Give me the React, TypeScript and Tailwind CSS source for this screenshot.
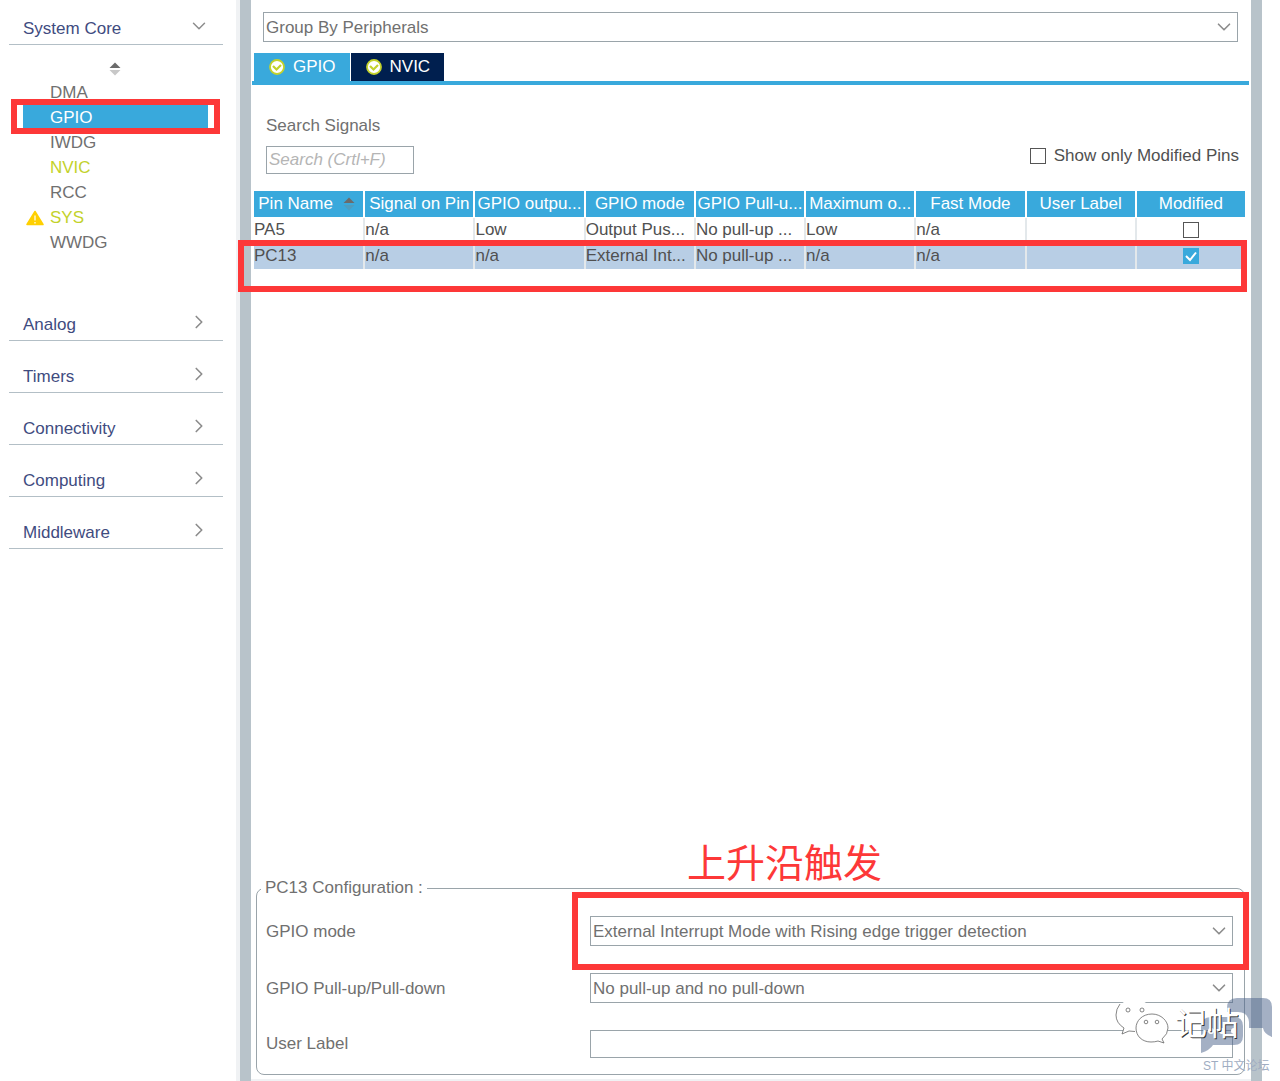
import React from 'react';
import { LuChevronDown, LuChevronRight } from 'react-icons/lu';

const coreItems = [
    { name: 'DMA' },
    { name: 'GPIO', selected: true },
    { name: 'IWDG' },
    { name: 'NVIC', active: true },
    { name: 'RCC' },
    { name: 'SYS', active: true, warning: true },
    { name: 'WWDG' },
];

const categories = ['Analog', 'Timers', 'Connectivity', 'Computing', 'Middleware'];

const columns = [
    'Pin Name',
    'Signal on Pin',
    'GPIO outpu...',
    'GPIO mode',
    'GPIO Pull-u...',
    'Maximum o...',
    'Fast Mode',
    'User Label',
    'Modified',
];

const pins = [
    { cells: ['PA5', 'n/a', 'Low', 'Output Pus...', 'No pull-up ...', 'Low', 'n/a', ''], modified: false },
    { cells: ['PC13', 'n/a', 'n/a', 'External Int...', 'No pull-up ...', 'n/a', 'n/a', ''], modified: true },
];

const SortIcon: React.FC<{ top: string; bottom: string }> = ({ top, bottom }) => (
    <svg width="12" height="14" viewBox="0 0 12 14" className="shrink-0">
        <path d="M6 0.5 11.5 6H0.5z" fill={top} />
        <path d="M0.5 8h11L6 13.5z" fill={bottom} />
    </svg>
);

const WarningIcon: React.FC = () => (
    <svg width="18" height="16" viewBox="0 0 18 16">
        <path d="M9 1.5 17 14.5H1z" fill="#ffd000" stroke="#ffd000" strokeWidth="1.5" strokeLinejoin="round" />
        <path d="M9 5.5v5M9 12v1.5" stroke="#fff" strokeWidth="1.2" />
    </svg>
);

const CheckBadge: React.FC = () => (
    <svg width="16" height="16" viewBox="0 0 16 16">
        <circle cx="8" cy="8" r="7" fill="#fff" stroke="#c3d22b" strokeWidth="1.8" />
        <path d="M4 7 7.5 10.5 12 6" fill="none" stroke="#c3d22b" strokeWidth="2.2" />
    </svg>
);

const CheckBox: React.FC<{ id: string; label?: string; checked?: boolean }> = ({ id, label, checked }) => (
    <span className="relative inline-flex size-4">
        <input
            id={id}
            type="checkbox"
            aria-label={label}
            defaultChecked={checked}
            className="peer size-4 appearance-none border border-[#555] bg-white checked:border-[#39a9dc] checked:bg-[#39a9dc]"
        />
        <svg viewBox="0 0 16 16" className="pointer-events-none absolute inset-0 hidden peer-checked:block">
            <path d="M3 8 7 12 13 4.5" fill="none" stroke="#fff" strokeWidth="2" />
        </svg>
    </span>
);

const SelectBox: React.FC<{ id: string; label?: string; text: string }> = ({ id, label, text }) => (
    <div className="relative">
        <select
            id={id}
            aria-label={label}
            className="block h-[30px] w-full appearance-none border border-[#9aa4aa] bg-white px-[2px] pt-[2px] text-[#707070]"
        >
            <option>{text}</option>
        </select>
        <LuChevronDown
            size={22}
            strokeWidth={1.8}
            className="pointer-events-none absolute top-1 right-[3px] text-[#8c8c8c]"
        />
    </div>
);

const Sidebar: React.FC = () => (
    <nav className="w-[240px] shrink-0 border-r-4 border-[#f0f2f4] pt-3 pr-[13px] pl-[9px] text-[#3f4c7f]">
        <button className="flex h-[33px] w-full items-center justify-between border-b border-[#b3bfc6] px-[13px] pt-[2px] pl-[14px]">
            System Core
            <LuChevronDown size={22} strokeWidth={1.6} className="mb-[6px] text-[#8c8c8c]" />
        </button>
        <div className="flex h-[34px] items-end justify-center pr-[2px] pb-[3px]">
            <SortIcon top="#6b6b6b" bottom="#c8c8c8" />
        </div>
        <ul className="mr-[15px] ml-[14px]">
            {coreItems.map((item) => (
                <li key={item.name} className="relative">
                    <button
                        className={`flex h-[25px] w-full items-center pt-[2px] ${
                            item.selected ? 'bg-[#39a9dc] text-white' : item.active ? 'text-[#c3d22b]' : 'text-[#707070]'
                        }`}
                    >
                        <span className="flex w-[27px] pl-[3px]">{item.warning && <WarningIcon />}</span>
                        {item.name}
                    </button>
                    {item.selected && (
                        <div className="pointer-events-none absolute -inset-x-3 -inset-y-[5px] border-6 border-[#fd3838]" />
                    )}
                </li>
            ))}
        </ul>
        <div className="mt-[35px]">
            {categories.map((name) => (
                <button
                    key={name}
                    className="flex h-[52px] w-full items-end justify-between border-b border-[#b3bfc6] pr-[13px] pb-[3px] pl-[14px]"
                >
                    {name}
                    <LuChevronRight size={22} strokeWidth={1.8} className="mb-1 text-[#8c8c8c]" />
                </button>
            ))}
        </div>
    </nav>
);

const PinTable: React.FC = () => (
    <div className="relative mr-1 ml-[3px]">
        <table className="w-full table-fixed border-collapse whitespace-nowrap">
            <thead>
                <tr className="h-[26px] bg-[#39a9dc] text-white">
                    {columns.map((name, i) => (
                        <th key={name} className="border-r-2 border-b border-white p-0 font-normal">
                            {i === 0 ? (
                                <div className="flex items-center justify-center gap-[10px] pr-1">
                                    {name}
                                    <SortIcon top="#6b6b6b" bottom="#4d9dc0" />
                                </div>
                            ) : (
                                name
                            )}
                        </th>
                    ))}
                </tr>
            </thead>
            <tbody>
                {pins.map((pin) => (
                    <tr
                        key={pin.cells[0]}
                        className={`h-[26px] text-[#505050] ${pin.modified ? 'bg-[#b8cee5]' : ''}`}
                    >
                        {pin.cells.map((cell, i) => (
                            <td key={i} className="overflow-hidden border-r-2 border-[#e3e8eb] p-0">
                                {cell}
                            </td>
                        ))}
                        <td className="p-0">
                            <div className="flex justify-center">
                                <CheckBox
                                    id={`modified-${pin.cells[0]}`}
                                    label={`${pin.cells[0]} modified`}
                                    checked={pin.modified}
                                />
                            </div>
                        </td>
                    </tr>
                ))}
            </tbody>
        </table>
        <div className="pointer-events-none absolute top-[49px] right-0 -left-4 h-[52px] border-6 border-[#fd3838]" />
    </div>
);

const PinConfig: React.FC = () => (
    <fieldset className="relative mr-[6px] mb-1 ml-[5px] rounded-lg border border-[#9aa4aa] pr-[11px] pb-4 pl-[9px] text-[#707070]">
        <legend className="-ml-[5px] px-1 leading-6">PC13 Configuration :</legend>
        <p className="absolute -top-[66px] left-[430px] font-['Noto_Sans_CJK_SC',sans-serif] text-[39px] leading-[52px] text-[#fd3838]">
            上升沿触发
        </p>
        <div className="flex flex-col gap-[27px] pt-4">
            <div className="relative grid grid-cols-[324px_1fr] items-center">
                <label htmlFor="gpio-mode" className="pt-[2px]">
                    GPIO mode
                </label>
                <SelectBox id="gpio-mode" text="External Interrupt Mode with Rising edge trigger detection" />
                <div className="pointer-events-none absolute -top-6 -right-4 -bottom-6 left-[306px] border-6 border-[#fd3838]" />
            </div>
            <div className="grid grid-cols-[324px_1fr] items-center">
                <label htmlFor="gpio-pull" className="pt-[2px]">
                    GPIO Pull-up/Pull-down
                </label>
                <SelectBox id="gpio-pull" text="No pull-up and no pull-down" />
            </div>
            <div className="grid grid-cols-[324px_1fr] items-center">
                <label htmlFor="user-label">User Label</label>
                <input id="user-label" type="text" className="h-7 border border-[#9aa4aa] px-[2px]" />
            </div>
        </div>
    </fieldset>
);

const Watermark: React.FC = () => (
    <div className="pointer-events-none absolute right-0 bottom-0 h-[91px] w-[170px]">
        <svg viewBox="0 0 170 91" className="absolute inset-0">
            <path
                d="M127 8H153Q162 8 162 17V47Q154 44 153 38H139V32Q138 22 128 22H117V18Q117 8 127 8z"
                fill="#4a628a"
                fillOpacity="0.5"
            />
            <path
                d="M101 27H124Q133 27 133 36V46Q133 55 124 55H103Q100 60 91 63V37Q91 27 101 27z"
                fill="#4a628a"
                fillOpacity="0.5"
            />
            <g fill="#fff">
                <circle cx="101" cy="41" r="3" />
                <circle cx="112" cy="41" r="3" />
                <circle cx="124" cy="41" r="3" />
            </g>
            <g fill="#fff" stroke="#666" strokeWidth="0.8">
                <path
                    d="M24 9.5 C34 9.5 42 15 43 24 Q42 42 24 41.500 L19 41 L12 44 L14 38 Q6 32 6 25 C6 16 14 9.500 24 9.500z"
                    stroke="none"
                />
                <path d="M10 14 Q6 19 6 25 Q6 33 14 38 L12 44 L19 41 L25 41.500" fill="none" />
                <circle cx="18" cy="20" r="2" />
                <circle cx="32" cy="20" r="2" />
                <path d="M42 24 C51 24 58 31 58 38 Q58 44 52 49 L54 53 L48 51 Q45 52 41 52 C32 52 26 46 26 38 C26 31 32 24 42 24z" />
                <circle cx="36" cy="32" r="1.8" />
                <circle cx="47" cy="32" r="1.8" />
            </g>
        </svg>
        <span className="absolute top-2 left-[65px] font-['Noto_Sans_CJK_SC',sans-serif] text-[32px] leading-[46px] text-white [text-shadow:1px_1px_0_#333]">
            记帖
        </span>
        <span className="absolute top-[66px] left-[93px] font-['Liberation_Sans','Noto_Sans_CJK_SC',sans-serif] text-xs leading-5 whitespace-nowrap text-[#a0adc2]">
            ST 中文论坛
        </span>
    </div>
);

const App: React.FC = () => {
    return (
        <div className="relative flex min-h-screen bg-white font-['Liberation_Sans',Arial,sans-serif] text-[17px] leading-6">
            <Sidebar />
            <main className="flex min-w-0 flex-1 flex-col border-x-11 border-[#b8c3ca] pt-3">
                <div className="mr-[13px] ml-3">
                    <SelectBox id="group-by" label="Group by" text="Group By Peripherals" />
                </div>
                {/* 탭 */}
                <div className="mt-[11px] mr-[2px] ml-px flex gap-px border-b-4 border-[#39a9dc] pl-[2px] text-white">
                    <button className="flex h-7 items-center gap-2 bg-[#39a9dc] pr-[14px] pl-[15px]">
                        <CheckBadge />
                        GPIO
                    </button>
                    <button className="flex h-7 items-center gap-2 bg-[#001f4f] pr-[14px] pl-[15px]">
                        <CheckBadge />
                        NVIC
                    </button>
                </div>
                {/* 검색 */}
                <div className="mt-[29px] mr-3 mb-[17px] ml-[15px] flex items-end justify-between">
                    <div className="flex flex-col gap-2 text-[#707070]">
                        <label htmlFor="search">Search Signals</label>
                        <input
                            id="search"
                            type="text"
                            placeholder="Search (Crtl+F)"
                            className="h-7 w-[148px] border border-[#9aa4aa] px-[2px] placeholder:text-[#b5b5b5] placeholder:italic"
                        />
                    </div>
                    <div className="mb-[6px] flex items-center gap-2 text-[#505050]">
                        <CheckBox id="only-modified" />
                        <label htmlFor="only-modified">Show only Modified Pins</label>
                    </div>
                </div>
                <PinTable />
                <div className="flex-1" />
                <PinConfig />
                <div className="h-[2px] bg-[#f0f2f4]" />
            </main>
            <div className="w-[18px] shrink-0" />
            <Watermark />
        </div>
    );
};

export default App;
